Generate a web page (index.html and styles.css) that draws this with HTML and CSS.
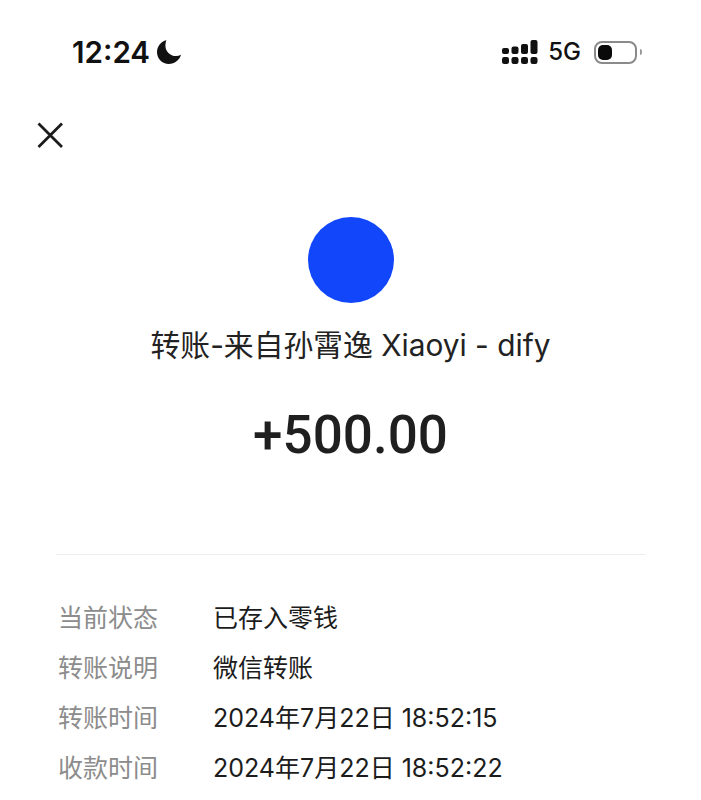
FILE: index.html
```html
<!DOCTYPE html>
<html lang="zh-CN">
<head>
<meta charset="utf-8">
<title>转账详情</title>
<link rel="stylesheet" href="styles.css">
</head>
<body>
<div class="page">
  <header class="status">
    <div class="status-left">
      <span class="time">12:24</span>
      <svg class="moon" viewBox="0 0 24 24" width="24" height="24"><path d="M9.4 0.2C8.7 1.9 8.4 3.6 8.4 5.4c0 5.9 4.7 10.6 10.6 10.6 1.8 0 3.5-.4 5-1.2C22.5 20.1 17.6 24 11.8 24 5.2 24 0 18.7 0 12.1 0 6.4 4 1.4 9.4.2z"/></svg>
    </div>
    <div class="status-right">
      <svg class="signal" viewBox="0 0 36 24" width="36" height="24">
        <rect x="0" y="8" width="7" height="6" rx="2"/><rect x="0" y="17" width="7" height="7" rx="2.2"/>
        <rect x="9.5" y="6.5" width="7" height="7.5" rx="2"/><rect x="9.5" y="17" width="7" height="7" rx="2.2"/>
        <rect x="19" y="4" width="7" height="10" rx="2"/><rect x="19" y="17" width="7" height="7" rx="2.2"/>
        <rect x="28.5" y="0" width="7" height="14" rx="2"/><rect x="28.5" y="17" width="7" height="7" rx="2.2"/>
      </svg>
      <span class="net">5G</span>
      <div class="battery"><div class="battery-fill"></div></div>
      <div class="battery-cap"></div>
    </div>
  </header>

  <div class="close-row">
    <svg class="close" viewBox="0 0 28 28" width="28" height="28"><path d="M2.5 2.5L26 26M26 2.5L2.5 26"/></svg>
  </div>

  <main class="summary">
    <div class="avatar"></div>
    <div class="title">转账-来自孙霄逸 Xiaoyi - dify</div>
    <div class="amount">+500.00</div>
  </main>

  <section class="details">
    <div class="row"><span class="label">当前状态</span><span class="value">已存入零钱</span></div>
    <div class="row"><span class="label">转账说明</span><span class="value">微信转账</span></div>
    <div class="row"><span class="label">转账时间</span><span class="value">2024年7月22日 18:52:15</span></div>
    <div class="row"><span class="label">收款时间</span><span class="value">2024年7月22日 18:52:22</span></div>
  </section>
</div>
</body>
</html>
```
FILE: styles.css
```css
* { box-sizing: border-box; }
html, body { margin: 0; padding: 0; background: #fff; }
body {
  font-family: "Inter", "Noto Sans CJK SC", sans-serif;
  color: #1c1c1c;
  height: 800px;
  overflow: hidden;
}
.page { width: 701px; height: 800px; overflow: hidden; }

.status {
  height: 104px;
  padding: 32px 59px 0 72px;
  display: flex;
  justify-content: space-between;
  align-items: flex-start;
}
.status-left { display: flex; align-items: center; gap: 7px; height: 40px; }
.time { font-size: 29.6px; font-weight: 600; color: #111; line-height: 40px; }
.moon { fill: #111; display: block; }
.status-right { display: flex; align-items: center; height: 40px; }
.signal { fill: #111; display: block; }
.net { font-size: 24px; font-weight: 500; color: #111; margin-left: 10px; line-height: 40px; }
.battery {
  width: 43px;
  height: 23px;
  margin-left: 13px;
  border: 2px solid #8a8a8a;
  border-radius: 8px;
  padding: 2px;
}
.battery-fill { width: 14px; height: 15px; background: #0a0a0a; border-radius: 5px; }
.battery-cap { width: 2px; height: 6px; margin-left: 3px; background: #9a9a9a; border-radius: 0 2px 2px 0; }

.close-row { height: 113px; padding: 17px 0 0 36px; }
.close { display: block; stroke: #1c1c1c; stroke-width: 2.8; fill: none; }

.summary { display: flex; flex-direction: column; align-items: center; height: 338px; border-bottom: 1px solid #ececec; margin: 0 56px; }
.avatar { width: 86px; height: 86px; border-radius: 50%; background: #1146fb; }
.title { margin-top: 22px; font-size: 29.8px; line-height: 40px; color: #222; white-space: nowrap; }
.amount { margin-top: 38px; font-size: 53px; line-height: 64px; font-weight: 500; color: #1f1f1f; font-family: "Roboto", sans-serif; }

.details { padding: 36px 0 0 58px; }
.row { display: flex; height: 50px; align-items: center; font-size: 25px; }
.label { width: 155px; color: #8c8c8c; }
.value { color: #1c1c1c; white-space: nowrap; }
```
